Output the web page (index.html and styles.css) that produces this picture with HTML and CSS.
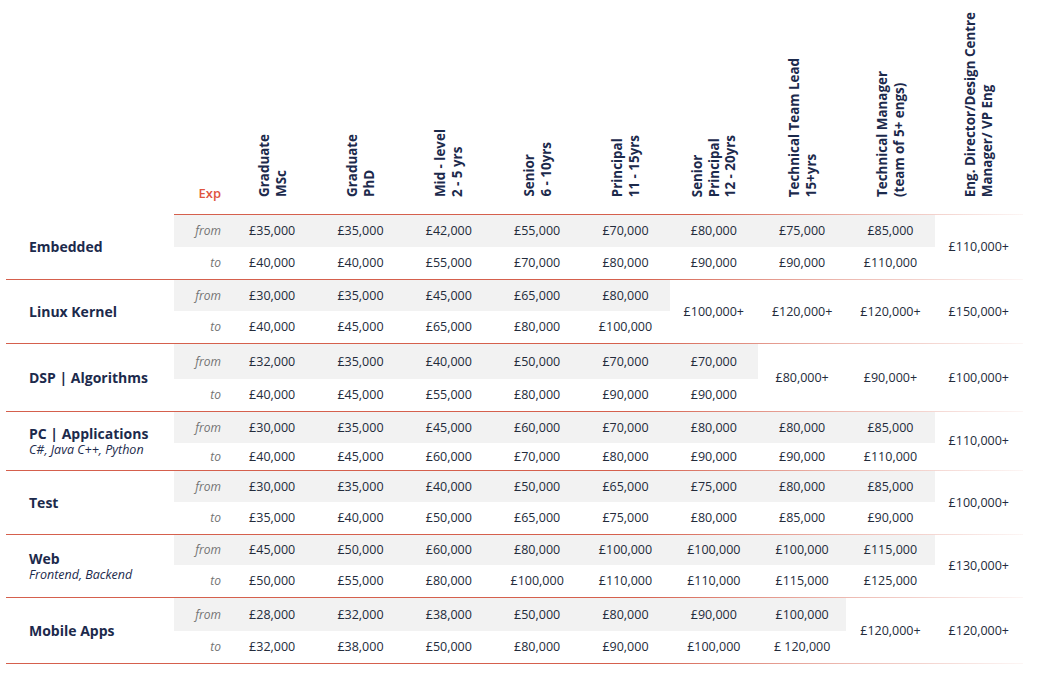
FILE: index.html
```
<!DOCTYPE html>
<html lang="en">
<head>
<meta charset="utf-8">
<title>Salary guide</title>
<link rel="stylesheet" href="styles.css">
</head>
<body>
<table class="grid">
  <colgroup>
    <col class="c-label">
    <col class="c-exp">
    <col class="c-data" span="9">
  </colgroup>
  <thead>
    <tr class="head">
      <th></th>
      <th class="exp">Exp</th>
      <th><div class="vt">Graduate<br>MSc</div></th>
      <th><div class="vt">Graduate<br>PhD</div></th>
      <th><div class="vt">Mid - level<br>2 - 5 yrs</div></th>
      <th><div class="vt">Senior<br>6 - 10yrs</div></th>
      <th><div class="vt">Principal<br>11 - 15yrs</div></th>
      <th><div class="vt">Senior<br>Principal<br>12 - 20yrs</div></th>
      <th><div class="vt">Technical Team Lead<br>15+yrs</div></th>
      <th><div class="vt">Technical Manager<br>(team of 5+ engs)</div></th>
      <th><div class="vt">Eng. Director/Design Centre<br>Manager/ VP Eng</div></th>
    </tr>
    <tr class="rule-row"><td></td><td colspan="10"><div class="rule"></div></td></tr>
  </thead>
  <tbody>
    <tr class="from h32">
      <th class="label" rowspan="2"><span class="title">Embedded</span></th>
      <td class="ft">from</td><td>£35,000</td><td>£35,000</td><td>£42,000</td><td>£55,000</td><td>£70,000</td><td>£80,000</td><td>£75,000</td><td>£85,000</td>
      <td class="span" rowspan="2">£110,000+</td>
    </tr>
    <tr class="to h32">
      <td class="ft">to</td><td>£40,000</td><td>£40,000</td><td>£55,000</td><td>£70,000</td><td>£80,000</td><td>£90,000</td><td>£90,000</td><td>£110,000</td>
    </tr>
    <tr class="rule-row"><td colspan="11"><div class="rule"></div></td></tr>

    <tr class="from h31">
      <th class="label" rowspan="2"><span class="title">Linux Kernel</span></th>
      <td class="ft">from</td><td>£30,000</td><td>£35,000</td><td>£45,000</td><td>£65,000</td><td>£80,000</td>
      <td class="span" rowspan="2">£100,000+</td><td class="span" rowspan="2">£120,000+</td><td class="span" rowspan="2">£120,000+</td><td class="span" rowspan="2">£150,000+</td>
    </tr>
    <tr class="to h32">
      <td class="ft">to</td><td>£40,000</td><td>£45,000</td><td>£65,000</td><td>£80,000</td><td>£100,000</td>
    </tr>
    <tr class="rule-row"><td colspan="11"><div class="rule"></div></td></tr>

    <tr class="from h35">
      <th class="label" rowspan="2"><span class="title">DSP | Algorithms</span></th>
      <td class="ft">from</td><td>£32,000</td><td>£35,000</td><td>£40,000</td><td>£50,000</td><td>£70,000</td><td>£70,000</td>
      <td class="span" rowspan="2">£80,000+</td><td class="span" rowspan="2">£90,000+</td><td class="span" rowspan="2">£100,000+</td>
    </tr>
    <tr class="to h32">
      <td class="ft">to</td><td>£40,000</td><td>£45,000</td><td>£55,000</td><td>£80,000</td><td>£90,000</td><td>£90,000</td>
    </tr>
    <tr class="rule-row"><td colspan="11"><div class="rule"></div></td></tr>

    <tr class="from h31">
      <th class="label" rowspan="2"><span class="title">PC | Applications</span><span class="sub">C#, Java C++, Python</span></th>
      <td class="ft">from</td><td>£30,000</td><td>£35,000</td><td>£45,000</td><td>£60,000</td><td>£70,000</td><td>£80,000</td><td>£80,000</td><td>£85,000</td>
      <td class="span" rowspan="2">£110,000+</td>
    </tr>
    <tr class="to h27">
      <td class="ft">to</td><td>£40,000</td><td>£45,000</td><td>£60,000</td><td>£70,000</td><td>£80,000</td><td>£90,000</td><td>£90,000</td><td>£110,000</td>
    </tr>
    <tr class="rule-row"><td colspan="11"><div class="rule"></div></td></tr>

    <tr class="from h31">
      <th class="label" rowspan="2"><span class="title">Test</span></th>
      <td class="ft">from</td><td>£30,000</td><td>£35,000</td><td>£40,000</td><td>£50,000</td><td>£65,000</td><td>£75,000</td><td>£80,000</td><td>£85,000</td>
      <td class="span" rowspan="2">£100,000+</td>
    </tr>
    <tr class="to h32">
      <td class="ft">to</td><td>£35,000</td><td>£40,000</td><td>£50,000</td><td>£65,000</td><td>£75,000</td><td>£80,000</td><td>£85,000</td><td>£90,000</td>
    </tr>
    <tr class="rule-row"><td colspan="11"><div class="rule"></div></td></tr>

    <tr class="from h30">
      <th class="label" rowspan="2"><span class="title">Web</span><span class="sub">Frontend, Backend</span></th>
      <td class="ft">from</td><td>£45,000</td><td>£50,000</td><td>£60,000</td><td>£80,000</td><td>£100,000</td><td>£100,000</td><td>£100,000</td><td>£115,000</td>
      <td class="span" rowspan="2">£130,000+</td>
    </tr>
    <tr class="to h32">
      <td class="ft">to</td><td>£50,000</td><td>£55,000</td><td>£80,000</td><td>£100,000</td><td>£110,000</td><td>£110,000</td><td>£115,000</td><td>£125,000</td>
    </tr>
    <tr class="rule-row"><td colspan="11"><div class="rule"></div></td></tr>

    <tr class="from h33">
      <th class="label" rowspan="2"><span class="title">Mobile Apps</span></th>
      <td class="ft">from</td><td>£28,000</td><td>£32,000</td><td>£38,000</td><td>£50,000</td><td>£80,000</td><td>£90,000</td><td>£100,000</td>
      <td class="span" rowspan="2">£120,000+</td><td class="span" rowspan="2">£120,000+</td>
    </tr>
    <tr class="to h32">
      <td class="ft">to</td><td>£32,000</td><td>£38,000</td><td>£50,000</td><td>£80,000</td><td>£90,000</td><td>£100,000</td><td>£ 120,000</td>
    </tr>
    <tr class="rule-row"><td colspan="11"><div class="rule"></div></td></tr>
  </tbody>
</table>
</body>
</html>
```

FILE: styles.css
```
html, body {
  margin: 0;
  padding: 0;
  background: #ffffff;
}

body {
  font-family: "Open Sans", "Liberation Sans", sans-serif;
  color: #232c3f;
}

.grid {
  margin-left: 6px;
  width: 1017px;
  table-layout: fixed;
  border-collapse: collapse;
  border-spacing: 0;
}

.c-label { width: 168px; }
.c-exp { width: 54px; }
.c-data { width: 88.33px; }

.grid th,
.grid td {
  padding: 0;
}

/* header */
.head { height: 214px; }

.grid .head th {
  vertical-align: bottom;
  padding-bottom: 17px;
  text-align: center;
}

.vt {
  writing-mode: vertical-rl;
  transform: rotate(180deg);
  margin: 0 auto;
  width: fit-content;
  font-size: 13.4px;
  font-weight: 700;
  line-height: 16.5px;
  color: #1c2a4c;
  text-align: start;
  white-space: nowrap;
}

.grid .head th.exp {
  text-align: right;
  padding-right: 7px;
  padding-bottom: 13px;
  font-size: 13px;
  font-weight: 600;
  color: #e0553f;
  line-height: 16px;
}

/* rules */
.rule-row td {
  height: 1px;
  line-height: 0;
  font-size: 0;
}

.rule {
  height: 1px;
  background: linear-gradient(to right, #d5604d 0%, #d5604d 62%, rgba(213, 96, 77, 0.45) 82%, rgba(213, 96, 77, 0.06) 100%);
}

/* body rows */
.h27 { height: 27px; }
.h30 { height: 30px; }
.h31 { height: 31px; }
.h32 { height: 32px; }
.h33 { height: 33px; }
.h35 { height: 35px; }

.grid tbody td {
  text-align: center;
  vertical-align: middle;
  font-size: 12.5px;
  line-height: 16px;
  color: #232b3b;
  white-space: nowrap;
}

.grid tbody tr.from td {
  background: #f2f2f2;
}

.grid tbody tr.from td.span {
  background: transparent;
}

.grid tbody td.ft {
  text-align: right;
  padding-right: 7px;
  font-style: italic;
  font-weight: 400;
  font-size: 12px;
  color: #727272;
}

.grid .label {
  text-align: left;
  vertical-align: middle;
  padding-left: 23px;
  color: #1c2a4c;
}

.label .title {
  display: block;
  font-size: 14px;
  font-weight: 700;
  line-height: 16px;
}

.label .sub {
  display: block;
  font-size: 12.5px;
  font-style: italic;
  font-weight: 400;
  line-height: 15px;
}
```
